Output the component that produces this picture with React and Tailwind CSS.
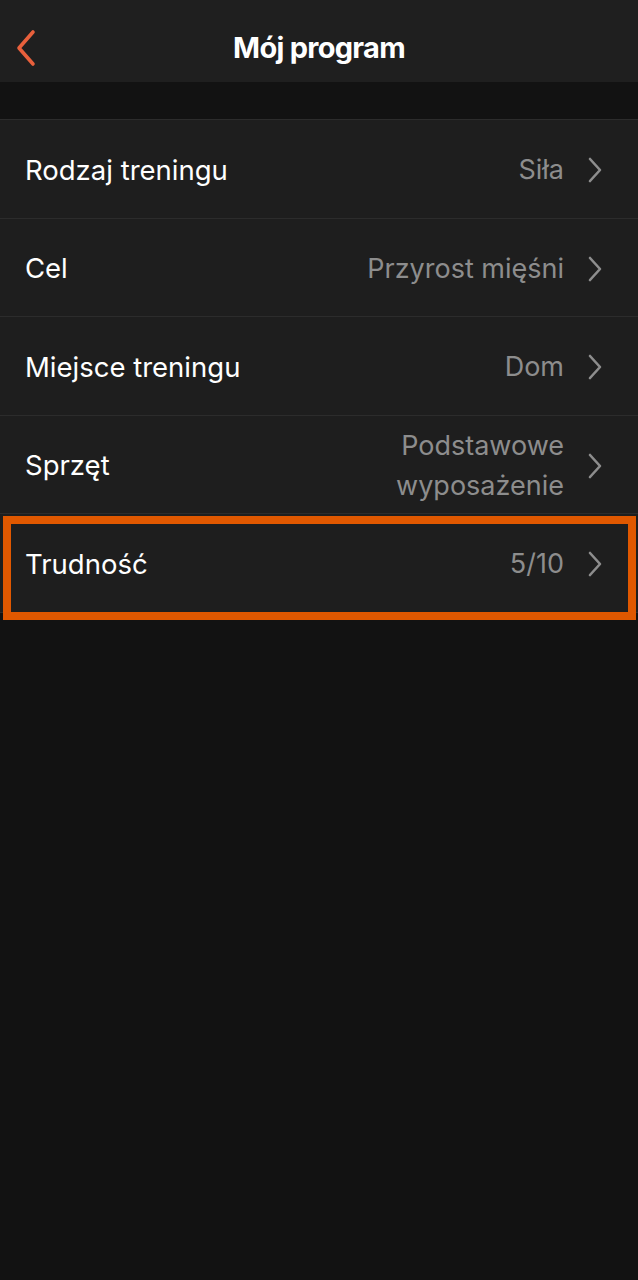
const rows = [
  { label: "Rodzaj treningu", value: ["Siła"] },
  { label: "Cel", value: ["Przyrost mięśni"] },
  { label: "Miejsce treningu", value: ["Dom"] },
  { label: "Sprzęt", value: ["Podstawowe", "wyposażenie"] },
  { label: "Trudność", value: ["5/10"], highlighted: true },
];

function Chevron() {
  return (
    <svg width="16" height="26" viewBox="0 0 16 26" fill="none" className="text-[#8d8d8d]">
      <path
        d="M3 2 L13 13 L3 24"
        stroke="currentColor"
        strokeWidth="2.6"
        strokeLinecap="round"
        strokeLinejoin="round"
      />
    </svg>
  );
}

function Row({ label, value, highlighted }) {
  return (
    <div className="relative flex h-[98.5px] items-center border-t border-[#2c2c2c] bg-[#1e1e1e] pl-[25px] pr-[35px] pt-[3px]">
      <span className="flex-1 text-[27.5px] text-white">{label}</span>
      <div className="flex items-center gap-[23px]">
        <div className="text-right text-[27px] leading-[40px] text-[#8d8d8d]">
          {value.map((line) => (
            <div key={line}>{line}</div>
          ))}
        </div>
        <Chevron />
      </div>
      {highlighted && (
        <div className="pointer-events-none absolute left-[3px] right-[2px] top-[2px] bottom-[-8px] border-[8px] border-[#e05800]" />
      )}
    </div>
  );
}

export default function App() {
  return (
    <main className="min-h-[1280px] bg-[#121212] font-['Inter',sans-serif]">
      <header className="relative flex h-[82px] items-center justify-center bg-[#1f1f1f] pt-[13px]">
        <button className="absolute left-[11px] top-[27px] text-[#e8603c]">
          <svg width="32" height="42" viewBox="0 0 32 42" fill="none">
            <path
              d="M22 5 L8 21 L22 37"
              stroke="currentColor"
              strokeWidth="3.6"
              strokeLinecap="round"
              strokeLinejoin="round"
            />
          </svg>
        </button>
        <h1 className="text-[29px] font-bold tracking-tight text-white">Mój program</h1>
      </header>

      <div className="h-[37px]" />

      <section className="border-b border-[#2c2c2c]">
        {rows.map((row) => (
          <Row key={row.label} {...row} />
        ))}
      </section>
    </main>
  );
}
